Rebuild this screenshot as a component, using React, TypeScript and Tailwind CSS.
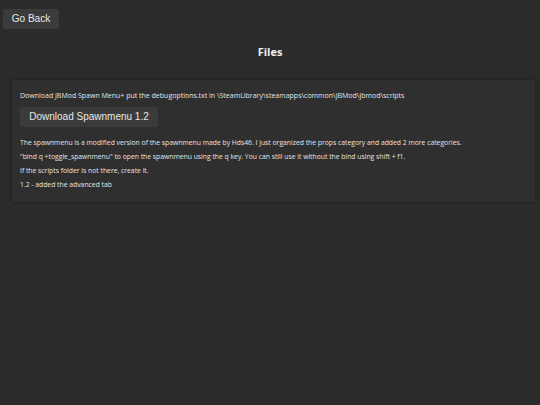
export default function App() {
  const body = { fontFamily: '"Open Sans", sans-serif' };
  const arial = { fontFamily: '"Liberation Sans", Arial, sans-serif' };
  return (
    <div className="min-h-[405px] w-[540px] bg-[#2b2b2b] text-[#e4e4e4] overflow-hidden" style={body}>
      <div className="pt-[4px] pl-[3px]">
        <button className="h-[20px] w-[56px] rounded-[2px] bg-[#3b3b3b] text-[10px] text-[#e8e8e8] leading-none" style={arial}>
          Go Back
        </button>
      </div>
      <h1 className="mt-[15px] text-center text-[11px] font-bold leading-[16px] text-[#f0f0f0]">Files</h1>
      <div className="mx-[12px] mt-[20px] w-[523px] bg-[#2f2f2f] shadow-[0_0_3px_rgba(0,0,0,0.35)] px-[8px] pt-[11px] pb-[12px]">
        <p className="text-[7px] leading-[10px]">
          Download JBMod Spawn Menu+ put the debugoptions.txt in \SteamLibrary\steamapps\common\JBMod\jbmod\scripts
        </p>
        <button className="mt-[6px] h-[20px] w-[138px] rounded-[2px] bg-[#3b3b3b] text-[10px] text-[#e8e8e8] leading-none" style={arial}>
          Download Spawnmenu 1.2
        </button>
        <div className="mt-[11px] flex flex-col gap-[4px] text-[6.8px] leading-[10px]">
          <p>The spawnmenu is a modified version of the spawnmenu made by Hds46. I just organized the props category and added 2 more categories.</p>
          <p>"bind q +toggle_spawnmenu" to open the spawnmenu using the q key. You can still use it without the bind using shift + f1.</p>
          <p>If the scripts folder is not there, create it.</p>
          <p>1.2 - added the advanced tab</p>
        </div>
      </div>
    </div>
  );
}
